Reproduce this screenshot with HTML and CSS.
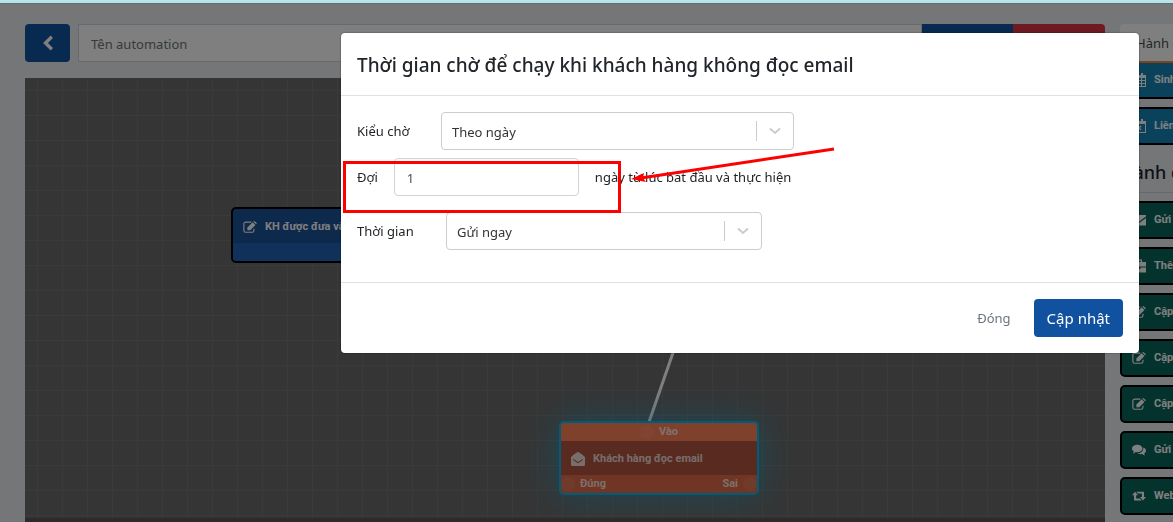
FILE: index.html
```html
<!DOCTYPE html>
<html lang="vi">
<head>
    <meta charset="UTF-8">
    <meta name="viewport" content="width=device-width, initial-scale=1.0">
    <title>Automation</title>
    <link rel="stylesheet" href="styles.css">
</head>
<body>
    <svg class="sprite" aria-hidden="true">
        <symbol id="icon-edit" viewBox="0 0 16 14">
            <path d="M9.5 1.500H3A2 2 0 0 0 1 3.500V11a2 2 0 0 0 2 2h7.500a2 2 0 0 0 2-2V9" fill="none" stroke="currentColor" stroke-width="1.300"/>
            <path d="M5 7.500 11 1.500 14.300 4.600 8.300 10.600H5z"/>
            <path d="M11.700 0.800 13 0l2.900 2.600-1 1.300z"/>
        </symbol>
        <symbol id="icon-calendar" viewBox="0 0 14 14">
            <path d="M0 2h3V0h2v2h4V0h2v2h3v12H0zM1 5v2h3V5zm4 0v2h4V5zm5 0v2h3V5zM1 8v2h3V8zm4 0v2h4V8zm5 0v2h3V8zM1 11v2h3v-2zm4 0v2h4v-2zm5 0v2h3v-2z" fill-rule="evenodd"/>
        </symbol>
        <symbol id="icon-calendar-x" viewBox="0 0 14 14">
            <path d="M0 2h3V0h2v2h4V0h2v2h3v12H0zM1 5v8h12V5z" fill-rule="evenodd"/>
            <path d="M5 7l4 4M9 7l-4 4" stroke="currentColor" stroke-width="1.400"/>
        </symbol>
        <symbol id="icon-envelope" viewBox="0 0 14 12">
            <path d="M0 1h14v1.500L7 7.500 0 2.500zM0 4l7 5 7-5v7.500H0z"/>
        </symbol>
        <symbol id="icon-briefcase" viewBox="0 0 14 13">
            <path d="M4 2.500V0h6v2.500h4V7H0V2.500zm1.300 0h3.400V1.200H5.300zM0 8h5.500v1.500h3V8H14v5H0z" fill-rule="evenodd"/>
        </symbol>
        <symbol id="icon-comments" viewBox="0 0 16 14">
            <path d="M6 1c3.300 0 6 1.900 6 4.300S9.300 9.600 6 9.600c-.6 0-1.100 0-1.600-.2C3.500 10.200 2.300 10.800 1 11c.5-.6 1-1.300 1.200-2.200C.8 8 0 6.700 0 5.300 0 2.900 2.700 1 6 1z"/>
            <path d="M13 4c1.800.7 3 2 3 3.600 0 1.400-.8 2.600-2.200 3.400.2.900.7 1.600 1.200 2.200-1.300-.2-2.500-.8-3.400-1.600-2 .4-3.900 0-5.300-.9 3.800-.1 6.900-2.400 6.700-6.700z"/>
        </symbol>
        <symbol id="icon-retweet" viewBox="0 0 16 12">
            <path d="M3.500 1 0 5h2.300v6H11L9 8.800H4.700V5H7zM12.500 11 16 7h-2.300V1H5l2 2.200h4.300V7H9z"/>
        </symbol>
        <symbol id="icon-envelope-open" viewBox="0 0 14 14">
            <path d="M7 0c1 0 7 4.600 7 5.200V12.800A1.200 1.200 0 0 1 12.800 14H1.200A1.200 1.200 0 0 1 0 12.800V5.200C0 4.600 6 0 7 0zM2 7.800l4 2.900q1 .6 2 0l4-2.900-.6-.8L8 9.500q-1 .6-2 0L2.600 7z" fill-rule="evenodd"/>
        </symbol>
    </svg>

    <div class="page">
        <main class="workspace">
            <div class="toolbar">
                <button class="btn-back" type="button" aria-label="Quay lại">
                    <svg width="12" height="16" viewBox="0 0 12 16"><path d="M9.800 1.800 3.500 8l6.300 6.200" fill="none" stroke="currentColor" stroke-width="3.400"/></svg>
                </button>
                <div class="name-group">
                    <input class="name-input" type="text" placeholder="Tên automation" aria-label="Tên automation">
                    <button class="btn-save" type="button" aria-label="Lưu"></button>
                    <button class="btn-delete" type="button" aria-label="Xóa"></button>
                </div>
            </div>
            <div class="canvas">
                <svg class="link" width="60" height="150"><line x1="60" y1="0" x2="8" y2="150" stroke="#fff" stroke-width="3"/></svg>
                <div class="node node-start">
                    <div class="node-title"><svg class="icon"><use href="#icon-edit"/></svg>KH được đưa vào</div>
                    <div class="node-ports"></div>
                </div>
                <div class="node node-email">
                    <div class="port-in"><i class="port"></i>Vào</div>
                    <div class="node-title"><svg class="icon"><use href="#icon-envelope-open"/></svg>Khách hàng đọc email</div>
                    <div class="node-ports"><i class="port"></i><span>Đúng</span><span class="port-false">Sai</span><i class="port"></i></div>
                </div>
            </div>
        </main>
        <aside class="sidebar">
            <a class="tab" href="#">Hành động</a>
            <div class="item item-trigger"><svg class="icon"><use href="#icon-calendar"/></svg>Sinh nhật</div>
            <div class="item item-trigger"><svg class="icon"><use href="#icon-calendar-x"/></svg>Liên hệ</div>
            <h4>Hành động</h4>
            <div class="item"><svg class="icon"><use href="#icon-envelope"/></svg>Gửi email</div>
            <div class="item"><svg class="icon"><use href="#icon-briefcase"/></svg>Thêm tag</div>
            <div class="item"><svg class="icon"><use href="#icon-edit"/></svg>Cập nhật</div>
            <div class="item"><svg class="icon"><use href="#icon-edit"/></svg>Cập nhật</div>
            <div class="item"><svg class="icon"><use href="#icon-edit"/></svg>Cập nhật</div>
            <div class="item"><svg class="icon"><use href="#icon-comments"/></svg>Gửi SMS</div>
            <div class="item"><svg class="icon"><use href="#icon-retweet"/></svg>Webhook</div>
        </aside>
    </div>

    <div class="backdrop">
        <div class="modal" role="dialog" aria-labelledby="modal-title">
            <h5 class="modal-title" id="modal-title">Thời gian chờ để chạy khi khách hàng không đọc email</h5>
            <form class="modal-body">
                <div class="row">
                    <label class="label-wide" for="wait-type">Kiểu chờ</label>
                    <div class="select select-type">
                        <select id="wait-type"><option>Theo ngày</option></select>
                        <svg width="14" height="8" viewBox="0 0 14 8"><path d="M2 1.500 7 6l5-4.500"/></svg>
                    </div>
                </div>
                <div class="row row-wait">
                    <label for="wait-days">Đợi</label>
                    <input id="wait-days" type="text" value="1">
                    <span>ngày từ lúc bắt đầu và thực hiện</span>
                </div>
                <div class="row">
                    <label class="label-time" for="wait-time">Thời gian</label>
                    <div class="select select-time">
                        <select id="wait-time"><option>Gửi ngay</option></select>
                        <svg width="14" height="8" viewBox="0 0 14 8"><path d="M2 1.500 7 6l5-4.500"/></svg>
                    </div>
                </div>
                <div class="highlight"></div>
                <svg class="arrow" width="204" height="36" viewBox="0 0 204 36">
                    <path d="M10 31 203 2" stroke="#f00" stroke-width="3"/>
                    <path d="M0 32 13 26 12 31 15 35z" fill="#f00"/>
                </svg>
            </form>
            <div class="modal-footer">
                <button class="btn-close" type="button">Đóng</button>
                <button class="btn-update" type="button">Cập nhật</button>
            </div>
        </div>
    </div>
</body>
</html>
```
FILE: styles.css
```css
* {
    box-sizing: border-box;
}

body {
    margin: 0;
    height: 100vh;
    overflow: hidden;
    background: #e9ecef;
    color: #212529;
    font-family: "Noto Sans", "Open Sans", sans-serif;
    font-size: 13px;
    line-height: 20px;
}

button, input, select {
    font: inherit;
}

.sprite {
    display: none;
}

.icon {
    width: 14px;
    height: 14px;
    flex: none;
    fill: currentColor;
}

.page {
    display: flex;
    gap: 15px;
    height: 100%;
    padding: 20px 0 0 25px;
    border-top: 4px solid #b7e3e9;
}

.workspace {
    flex: 1;
    display: flex;
    flex-direction: column;
    gap: 16px;
}

.toolbar {
    display: flex;
    gap: 8px;
}

.btn-back {
    width: 45px;
    height: 38px;
    border: 0;
    border-radius: 4px;
    background: #1052a0;
    color: #fff;
    display: flex;
    align-items: center;
    justify-content: center;
}

.name-group {
    flex: 1;
    display: flex;
}

.name-input {
    flex: 1;
    border: 1px solid #ced4da;
    padding: 2px 12px 0;
    background: #fff;
}

.name-input::placeholder {
    color: #6c757d;
}

.btn-save, .btn-delete {
    width: 91px;
    border: 0;
    background: #1052a0;
}

.btn-delete {
    width: 92px;
    background: #dc3545;
    border-radius: 0 4px 4px 0;
}

.canvas {
    flex: 1;
    position: relative;
    overflow: hidden;
    background-color: #6b6b6b;
    background-image: linear-gradient(#757575 1px, transparent 1px), linear-gradient(90deg, #757575 1px, transparent 1px);
    background-size: 25px 25px;
    background-position: 12px 12px;
    border-bottom: 4px solid #5e5254;
}

.node {
    position: absolute;
    width: 200px;
    border: 2px solid #000;
    border-radius: 5px;
    overflow: hidden;
    color: #fff;
    font: bold 11px/18px Roboto, "Liberation Sans", sans-serif;
}

.node-title {
    display: flex;
    align-items: center;
    gap: 8px;
    height: 34px;
    padding: 2px 10px 0;
}

.node-start {
    left: 206px;
    top: 129px;
    background: #1b5298;
}

.node-start .node-ports {
    height: 18px;
    background: #2164b4;
}

.node-email {
    left: 534px;
    top: 343px;
    border-color: #00b9f2;
    background: #b25640;
    box-shadow: 0 0 35px #00b9f280;
    color: #fffc;
}

.port {
    width: 14px;
    height: 14px;
    border-radius: 50%;
    background: #ffffff14;
}

.port-in, .node-email .node-ports {
    display: flex;
    align-items: center;
    gap: 5px;
    height: 18px;
    background: #ff8258;
}

.port-in {
    justify-content: center;
}

.node-email .node-ports {
    background: #e06b48;
}

.port-false {
    margin-left: auto;
}

.link {
    position: absolute;
    left: 616px;
    top: 194px;
}

.sidebar {
    width: 53px;
    overflow: hidden;
    white-space: nowrap;
}

.sidebar h4 {
    margin: 8px 0;
    padding: 5px 0 6px;
    border-bottom: 1px solid #ced4da;
    font-size: 18px;
    font-weight: 500;
    line-height: 28px;
}

.tab {
    display: block;
    width: 120px;
    height: 37px;
    padding: 9px 16px;
    border-radius: 4px 4px 0 0;
    background: #fff;
    color: #495057;
    text-decoration: none;
}

.item {
    display: flex;
    align-items: center;
    gap: 8px;
    width: 180px;
    height: 38px;
    margin-bottom: 8px;
    padding: 0 10px;
    border: 2px solid #000;
    border-radius: 5px;
    background: #08665c;
    color: #fff;
    font: bold 11px/18px Roboto, "Liberation Sans", sans-serif;
}

.item-trigger {
    background: #1485b8;
}

.tab + .item {
    border-top-color: #f98834;
}

.backdrop {
    position: fixed;
    inset: 3px 0 0;
    padding: 30px 34px 0 341px;
    background: rgba(0, 0, 0, 0.5);
}

.modal {
    border-radius: 4px;
    background: #fff;
    box-shadow: 0 0 2px #0008;
}

.modal-title {
    margin: 0;
    padding: 17px 16px 15px;
    border-bottom: 1px solid #dee2e6;
    font-size: 19px;
    font-weight: 500;
    line-height: 30px;
}

.modal-body {
    position: relative;
    padding: 16px 16px 32px;
}

.row {
    display: flex;
    align-items: center;
}

.row-wait {
    gap: 16px;
    margin: 8px 0 16px;
}

.label-wide {
    width: 84px;
}

.label-time {
    width: 89px;
}

.select {
    position: relative;
    width: 353px;
}

.select-time {
    width: 316px;
}

.select select, #wait-days {
    width: 100%;
    height: 38px;
    padding: 2px 10px 0;
    border: 1px solid #ccc;
    border-radius: 4px;
    background: #fff;
    color: #333;
    appearance: none;
}

#wait-days {
    width: 185px;
    padding: 2px 12px 0;
    border-color: #ced4da;
    color: #495057;
}

/* separator and chevron sit over the select */
.select::after {
    content: "";
    position: absolute;
    right: 37px;
    top: 9px;
    height: 20px;
    border-left: 1px solid #ccc;
}

.select svg {
    position: absolute;
    right: 12px;
    top: 15px;
    fill: none;
    stroke: #ccc;
    stroke-width: 2;
    pointer-events: none;
}

.highlight {
    position: absolute;
    left: 2px;
    top: 65px;
    width: 278px;
    height: 52px;
    border: 3px solid #f00;
}

.arrow {
    position: absolute;
    left: 290px;
    top: 51px;
}

.modal-footer {
    display: flex;
    align-items: center;
    justify-content: flex-end;
    gap: 10px;
    padding: 16px;
    border-top: 1px solid #dee2e6;
}

.btn-close, .btn-update {
    height: 38px;
    padding: 0 13px;
    border: 0;
    border-radius: 4px;
    background: none;
    color: #6c757d;
}

.btn-update {
    background: #1052a0;
    color: #fff;
    font-size: 15px;
}
```
